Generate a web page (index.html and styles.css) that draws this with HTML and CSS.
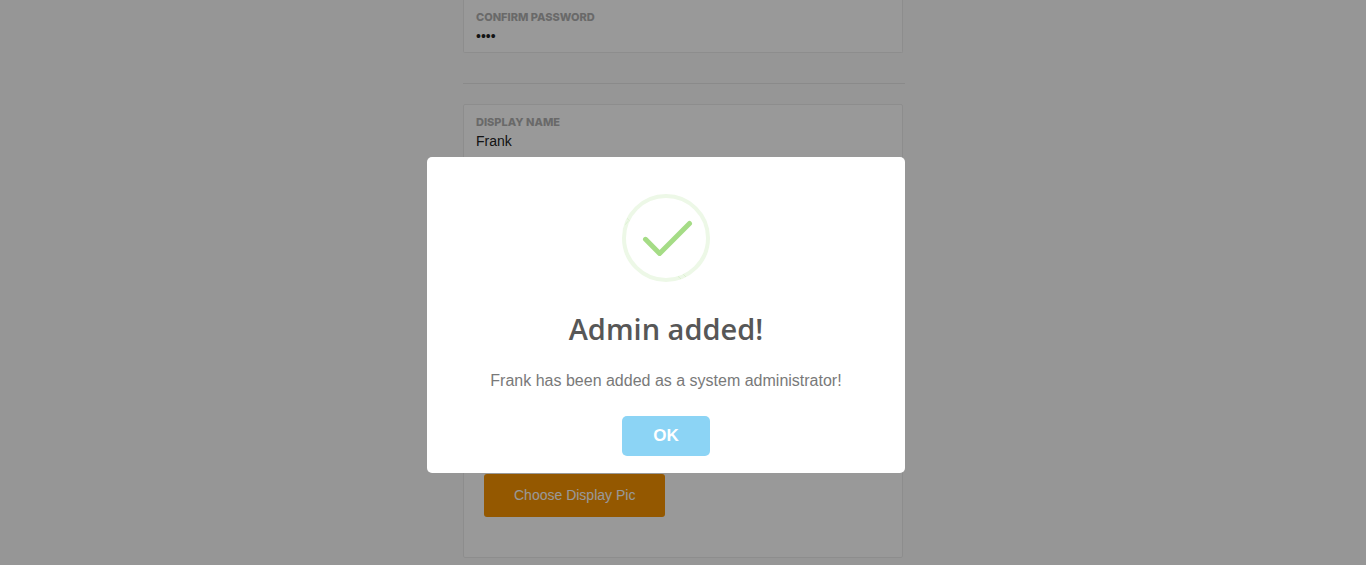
FILE: index.html
```html
<!DOCTYPE html>
<html lang="en">
<head>
<meta charset="utf-8">
<meta name="viewport" content="width=device-width, initial-scale=1">
<title>Admin added</title>
<link rel="stylesheet" href="styles.css">
</head>
<body>
<main class="form">
  <section class="panel panel-continued">
    <div class="field">
      <label class="field-label" for="confirm">CONFIRM PASSWORD</label>
      <input class="field-input" id="confirm" type="password" value="1234">
    </div>
  </section>
  <hr class="divider">
  <section class="panel">
    <div class="field">
      <label class="field-label" for="display-name">DISPLAY NAME</label>
      <input class="field-input" id="display-name" type="text" value="Frank">
    </div>
    <div class="upload">
      <div class="preview"></div>
      <button class="choose" type="button">Choose Display Pic</button>
    </div>
  </section>
</main>
<div class="overlay">
  <div class="modal" role="dialog" aria-modal="true" aria-labelledby="modal-title">
    <svg class="success" width="88" height="88" viewBox="0 0 88 88" fill="none" aria-hidden="true">
      <circle cx="44" cy="44" r="42" stroke="#edf8e7" stroke-width="4"/>
      <path d="M3.3 30.7L6 27.3M5 24.3L7.6 26.8M56 82.3L59 85M61.3 80.3L64 83" stroke="#d2edc3" stroke-width=".6"/>
      <path d="M23.5 45.3L37.6 59.4L67.5 29.5" stroke="#a5dc86" stroke-width="5" stroke-linecap="round" stroke-linejoin="round"/>
    </svg>
    <h2 class="modal-title" id="modal-title">Admin added!</h2>
    <p class="modal-text">Frank has been added as a system administrator!</p>
    <button class="ok" type="button">OK</button>
  </div>
</div>
</body>
</html>
```
FILE: styles.css
```css
* {
  box-sizing: border-box;
}

body {
  margin: 0;
  overflow: hidden;
  background: #fafafa;
  font-family: "Liberation Sans", Arial, sans-serif;
}

.form {
  max-width: 440px;
  margin: 0 auto;
}

.panel {
  border: 1px solid #ebebeb;
  border-radius: 2px;
  background: #fff;
}

.panel-continued {
  border-top: 0;
  border-radius: 0 0 2px 2px;
}

.field {
  display: flex;
  flex-direction: column;
  padding: 10px 12px 5px;
}

.field-label {
  color: #b0b0b0;
  font: 800 11px/14px Inter, sans-serif;
}

.field-input {
  width: 100%;
  height: 23px;
  padding: 1px 0 0;
  border: 0;
  background: transparent;
  color: #222;
  font: 14px/22px "Liberation Sans", Arial, sans-serif;
}

.divider {
  height: 1px;
  margin: 30px -2px 20px 0;
  border: 0;
  background: #e6e6e6;
}

.upload {
  padding: 0 20px 40px;
}

.preview {
  height: 317px;
}

.choose {
  display: block;
  padding: 0 30px;
  border: 0;
  border-radius: 3px;
  background: #f79300;
  color: #fff;
  font: 14px/43px "Liberation Sans", Arial, sans-serif;
}

.overlay {
  position: fixed;
  inset: 0;
  display: flex;
  align-items: flex-start;
  justify-content: center;
  padding: 157px 34px 0 0;
  background: rgba(0, 0, 0, 0.4);
}

.modal {
  display: flex;
  flex-direction: column;
  align-items: center;
  width: 100%;
  max-width: 478px;
  padding: 37px 17px 17px;
  border-radius: 5px;
  background: #fff;
  text-align: center;
}

.modal-title {
  margin: 27px 0 0;
  color: #575757;
  font: 600 29px/40px "Open Sans", "Noto Sans", sans-serif;
}

.modal-text {
  margin: 21px 0 24px;
  color: #797979;
  font-size: 16px;
  line-height: 22px;
}

.ok {
  padding: 0 31px;
  border: 0;
  border-radius: 5px;
  background: #8cd4f5;
  color: #fff;
  font: 700 17px/40px "Liberation Sans", Arial, sans-serif;
}
```
